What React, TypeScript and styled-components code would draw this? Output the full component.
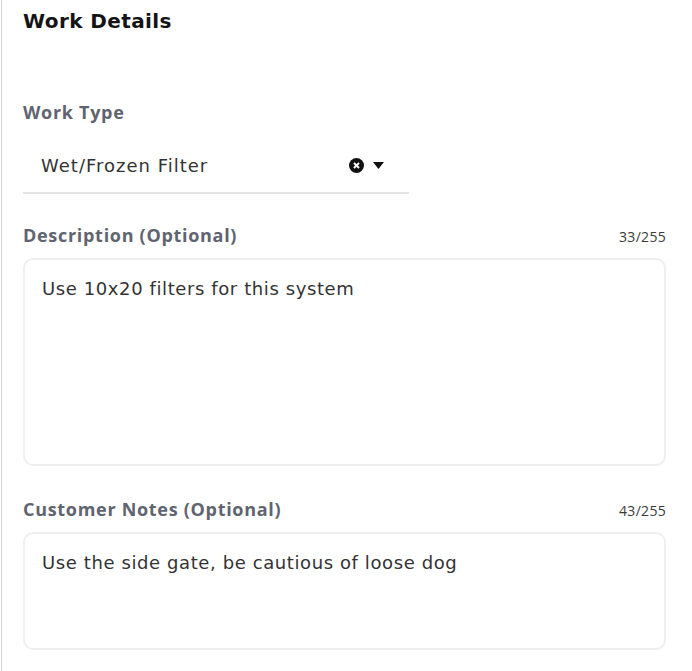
import React from 'react';
import styled, { createGlobalStyle } from 'styled-components';

const GlobalStyle = createGlobalStyle`
  html, body {
    margin: 0;
    padding: 0;
    background: #fff;
  }
  * { box-sizing: border-box; }
`;

const Panel = styled.section`
  margin-left: 1px;
  min-height: 671px;
  border-left: 1px solid #d4d4d4;
  padding: 8px 26px 0 21px;
  font-family: 'DejaVu Sans', 'Open Sans', sans-serif;
`;

const Title = styled.h2`
  margin: 0;
  font-size: 20px;
  line-height: 26px;
  font-weight: 700;
  letter-spacing: 0.4px;
  color: #141414;
`;

const Label = styled.label`
  display: block;
  font-family: 'Open Sans', Lato, sans-serif;
  font-size: 18px;
  line-height: 22px;
  font-weight: 700;
  letter-spacing: 0.7px;
  color: #5f6470;
`;

const Field = styled.div<{ $top: number }>`
  margin-top: ${(p) => p.$top}px;
  display: flex;
  flex-direction: column;
`;

const LabelRow = styled.div`
  display: flex;
  justify-content: space-between;
  align-items: baseline;
  line-height: 22px;
`;

const Counter = styled.span`
  font-family: 'Open Sans', Lato, sans-serif;
  font-size: 14px;
  letter-spacing: 0.3px;
  color: #3a3a3a;
`;

const Select = styled.div`
  margin-top: 26px;
  width: 386px;
  height: 45px;
  display: flex;
  align-items: center;
  padding: 0 0 10px 18px;
  border-bottom: 2px solid #e4e4e4;
`;

const SelectValue = styled.span`
  flex: 1;
  font-size: 18px;
  letter-spacing: 1px;
  color: #333;
`;

const Icons = styled.div`
  display: flex;
  align-items: center;
  gap: 9px;
  margin-right: 25px;
`;

const TextBox = styled.div<{ $height: number }>`
  margin-top: 10px;
  height: ${(p) => p.$height}px;
  border: 2px solid #efefef;
  border-radius: 10px;
  padding: 16px 17px;
  font-size: 18px;
  line-height: 26px;
  letter-spacing: 0.6px;
  color: #333;
`;

export default function App() {
  return (
    <>
      <GlobalStyle />
      <Panel>
        <Title>Work Details</Title>

        <Field $top={67}>
          <Label>Work Type</Label>
          <Select>
            <SelectValue>Wet/Frozen Filter</SelectValue>
            <Icons>
              <svg width="15" height="15" viewBox="0 0 16 16">
                <circle cx="8" cy="8" r="8" fill="#111" />
                <path d="M5.3 5.3 L10.7 10.7 M10.7 5.3 L5.3 10.7" stroke="#fff" strokeWidth="2" />
              </svg>
              <svg width="11" height="7" viewBox="0 0 11 7">
                <path d="M0 0 H11 L5.5 7 Z" fill="#111" />
              </svg>
            </Icons>
          </Select>
        </Field>

        <Field $top={30}>
          <LabelRow>
            <Label>Description (Optional)</Label>
            <Counter>33/255</Counter>
          </LabelRow>
          <TextBox $height={208}>Use 10x20 filters for this system</TextBox>
        </Field>

        <Field $top={32}>
          <LabelRow>
            <Label>Customer Notes (Optional)</Label>
            <Counter>43/255</Counter>
          </LabelRow>
          <TextBox $height={118}>Use the side gate, be cautious of loose dog</TextBox>
        </Field>
      </Panel>
    </>
  );
}
